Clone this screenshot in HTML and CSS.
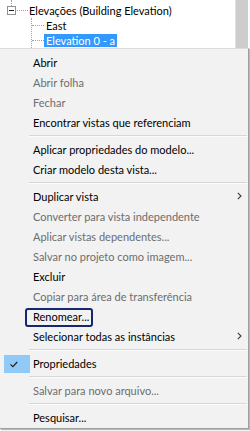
FILE: index.html
```html
<!DOCTYPE html>
<html>
<head>
<meta charset="utf-8">
<link rel="stylesheet" href="styles.css">
</head>
<body>
<div class="tree">
  <div class="tree-rows">
    <span class="vline-top"></span>
    <div class="row row-root">
      <span class="expander"><span class="minus"></span></span>
      <span class="hline hline-root"></span>
      <span class="label">Elevações (Building Elevation)</span>
    </div>
    <div class="row row-child">
      <span class="hline"></span>
      <span class="label">East</span>
    </div>
    <div class="row row-child">
      <span class="hline"></span>
      <span class="label selected">Elevation 0 - a</span>
    </div>
    <span class="vline"></span>
  </div>
  <div class="scrollbar"></div>
</div>
<div class="menu">
  <div class="item">Abrir</div>
  <div class="item disabled">Abrir folha</div>
  <div class="item disabled">Fechar</div>
  <div class="item">Encontrar vistas que referenciam</div>
  <div class="sep"></div>
  <div class="item">Aplicar propriedades do modelo...</div>
  <div class="item">Criar modelo desta vista...</div>
  <div class="sep"></div>
  <div class="item">Duplicar vista<svg class="arrow" width="5" height="8" viewBox="0 0 5 8"><path d="M0.8 0.8 L4 4 L0.8 7.2" fill="none" stroke="#3a3a3a" stroke-width="1.1"/></svg></div>
  <div class="item disabled">Converter para vista independente</div>
  <div class="item disabled">Aplicar vistas dependentes...</div>
  <div class="item disabled">Salvar no projeto como imagem...</div>
  <div class="item">Excluir</div>
  <div class="item disabled">Copiar para área de transferência</div>
  <div class="item focused">Renomear...</div>
  <div class="item">Selecionar todas as instâncias<svg class="arrow" width="5" height="8" viewBox="0 0 5 8"><path d="M0.8 0.8 L4 4 L0.8 7.2" fill="none" stroke="#3a3a3a" stroke-width="1.1"/></svg></div>
  <div class="sep"></div>
  <div class="item checked"><span class="check"><svg width="26" height="18" viewBox="0 0 26 18"><path d="M6.5 9.3 L8.9 11.7 L13.2 7" fill="none" stroke="#222" stroke-width="1.2"/></svg></span>Propriedades</div>
  <div class="sep"></div>
  <div class="item disabled">Salvar para novo arquivo...</div>
  <div class="sep"></div>
  <div class="item">Pesquisar...</div>
</div>
</body>
</html>
```
FILE: styles.css
```css
html, body {
  margin: 0;
  padding: 0;
  background: #ffffff;
  width: 250px;
  height: 431px;
  overflow: hidden;
  font-family: "Lato", "Noto Sans", sans-serif;
  font-size: 11px;
  color: #000;
}
.tree {
  height: 48px;
  display: flex;
  background: #fff;
}
.tree-rows {
  flex: 1;
  position: relative;
  padding-top: 3px;
}
.row {
  height: 15px;
  display: flex;
  align-items: center;
}
.row-root {
  padding-left: 7px;
}
.row-child {
  padding-left: 32px;
}
.expander {
  width: 9px;
  height: 9px;
  border: 1px solid #919191;
  box-sizing: border-box;
  display: flex;
  align-items: center;
  justify-content: center;
  background: #fff;
  flex-shrink: 0;
}
.minus {
  width: 5px;
  height: 1px;
  background: #1e1e1e;
}
.hline {
  width: 12px;
  height: 0;
  border-top: 1px dotted #a0a0a0;
  flex-shrink: 0;
}
.hline-root {
  width: 11px;
  margin-left: 1px;
}
.label {
  padding: 0 2px;
  height: 13px;
  line-height: 13px;
  white-space: nowrap;
}
.row-root .label {
  padding-left: 1px;
}
.selected {
  background: #3399ff;
  color: #fff;
}
.vline {
  position: absolute;
  left: 31px;
  top: 18px;
  height: 30px;
  border-left: 1px dotted #a0a0a0;
}
.vline-top {
  position: absolute;
  left: 11px;
  top: 0;
  height: 6px;
  border-left: 1px dotted #a0a0a0;
}
.scrollbar {
  width: 12px;
  background: #cdcdcd;
  border-left: 1px solid #e2e2e2;
  margin-right: 2px;
}
.menu {
  height: 381px;
  width: 249px;
  box-sizing: border-box;
  background: #f2f2f2;
  border-top: 1px solid #dcdcdc;
  border-right: 1px solid #a0a0a0;
  border-bottom: 1px solid #a0a0a0;
  box-shadow: 1px 1px 1px rgba(0,0,0,0.28);
  padding: 3px 0 1px 0;
  display: flex;
  flex-direction: column;
}
.item {
  height: 20px;
  flex-shrink: 0;
  display: flex;
  align-items: center;
  padding-left: 33px;
  position: relative;
  white-space: nowrap;
}
.disabled {
  color: #6d6d6d;
}
.arrow {
  margin-left: auto;
  margin-right: 6px;
  flex-shrink: 0;
}
.sep {
  flex-shrink: 0;
  height: 0;
  margin: 3px 1px 2px 29px;
  border-top: 1px solid #d7d7d7;
  border-bottom: 1px solid #fbfbfb;
}
.focused::before {
  content: "";
  position: absolute;
  left: 25px;
  top: 2px;
  width: 68px;
  height: 19px;
  box-sizing: border-box;
  border: 2px solid #14276f;
  border-radius: 3px;
}
.check {
  position: absolute;
  left: 4px;
  top: 2px;
  width: 26px;
  height: 18px;
  background: #91c9f7;
  display: block;
}
.check svg {
  display: block;
}
```
